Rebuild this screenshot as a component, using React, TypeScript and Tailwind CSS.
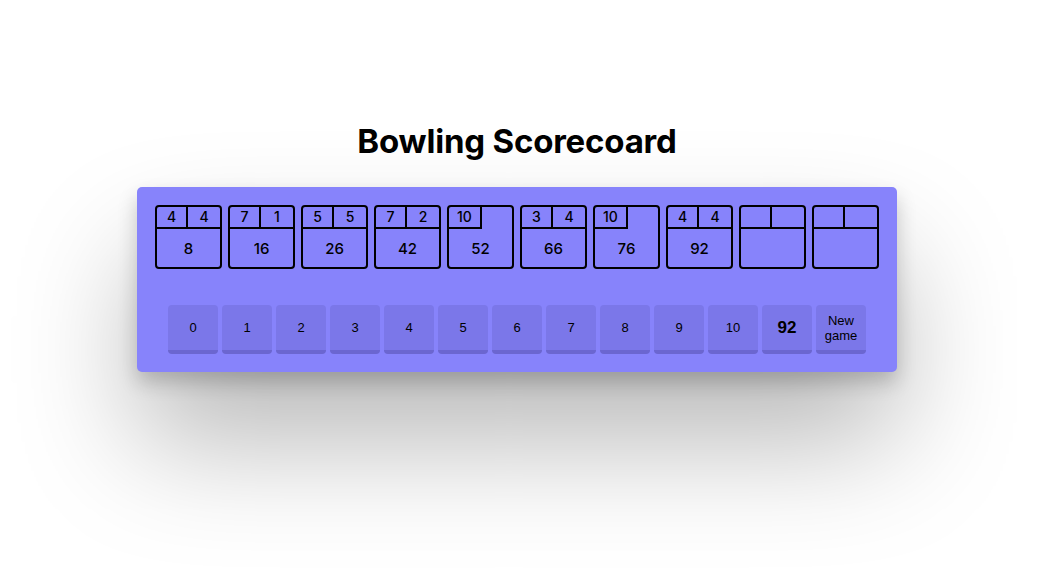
import React from 'react';

type Frame = { rolls: string[]; score: string; strike?: boolean };

const frames: Frame[] = [
  { rolls: ['4', '4'], score: '8' },
  { rolls: ['7', '1'], score: '16' },
  { rolls: ['5', '5'], score: '26' },
  { rolls: ['7', '2'], score: '42' },
  { rolls: ['10'], score: '52', strike: true },
  { rolls: ['3', '4'], score: '66' },
  { rolls: ['10'], score: '76', strike: true },
  { rolls: ['4', '4'], score: '92' },
  { rolls: ['', ''], score: '' },
  { rolls: ['', ''], score: '' },
];

const pins = ['0', '1', '2', '3', '4', '5', '6', '7', '8', '9', '10'];

function FrameBox({ frame }: { frame: Frame }) {
  return (
    <div className="w-[67px] h-[64px] border-2 border-black rounded-[4px] flex flex-col overflow-hidden">
      {frame.strike ? (
        <div className="h-[22px] flex">
          <div className="w-[33px] h-[22px] border-r-2 border-b-2 border-black flex items-center justify-center leading-none">
            {frame.rolls[0]}
          </div>
        </div>
      ) : (
        <div className="h-[22px] flex border-b-2 border-black">
          <div className="w-[31px] border-r-2 border-black flex items-center justify-center leading-none">
            {frame.rolls[0]}
          </div>
          <div className="flex-1 flex items-center justify-center leading-none">{frame.rolls[1]}</div>
        </div>
      )}
      <div className="flex-1 flex items-center justify-center text-[15px] leading-none">{frame.score}</div>
    </div>
  );
}

function App() {
  return (
    <div className="min-h-[577px] bg-white flex flex-col items-center pr-[17px] pt-[125px]">
      <h1 className="text-[33px] font-bold text-black leading-none tracking-[-0.2px] [font-family:Inter,'Noto_Sans',sans-serif]">
        Bowling Scorecoard
      </h1>
      <div className="mt-[29px] w-[760px] h-[185px] bg-[#8783fb] rounded-[5px] shadow-[0_10px_20px_rgba(0,0,0,0.2),0_70px_120px_rgba(0,0,0,0.28)] px-[18px] pt-[18px] flex flex-col">
        <div className="flex gap-[6px] text-[14px] font-medium text-black [font-family:Inter,sans-serif]">
          {frames.map((f, i) => (
            <FrameBox key={i} frame={f} />
          ))}
        </div>
        <div className="mt-[36px] flex justify-center gap-[4px] text-[13px] text-black [font-family:'Liberation_Sans',Arial,sans-serif]">
          {pins.map(p => (
            <button
              key={p}
              className="w-[50px] h-[49px] bg-[#7b77e9] border-b-4 border-[#6b66d0] rounded-[4px] flex items-center justify-center leading-none"
            >
              {p}
            </button>
          ))}
          <button className="w-[50px] h-[49px] bg-[#7b77e9] border-b-4 border-[#6b66d0] rounded-[4px] flex items-center justify-center text-[17px] font-semibold leading-none">
            92
          </button>
          <button className="w-[50px] h-[49px] bg-[#7b77e9] border-b-4 border-[#6b66d0] rounded-[4px] flex items-center justify-center text-[13px] leading-[15px]">
            New
            <br />
            game
          </button>
        </div>
      </div>
    </div>
  );
}

export default App;
